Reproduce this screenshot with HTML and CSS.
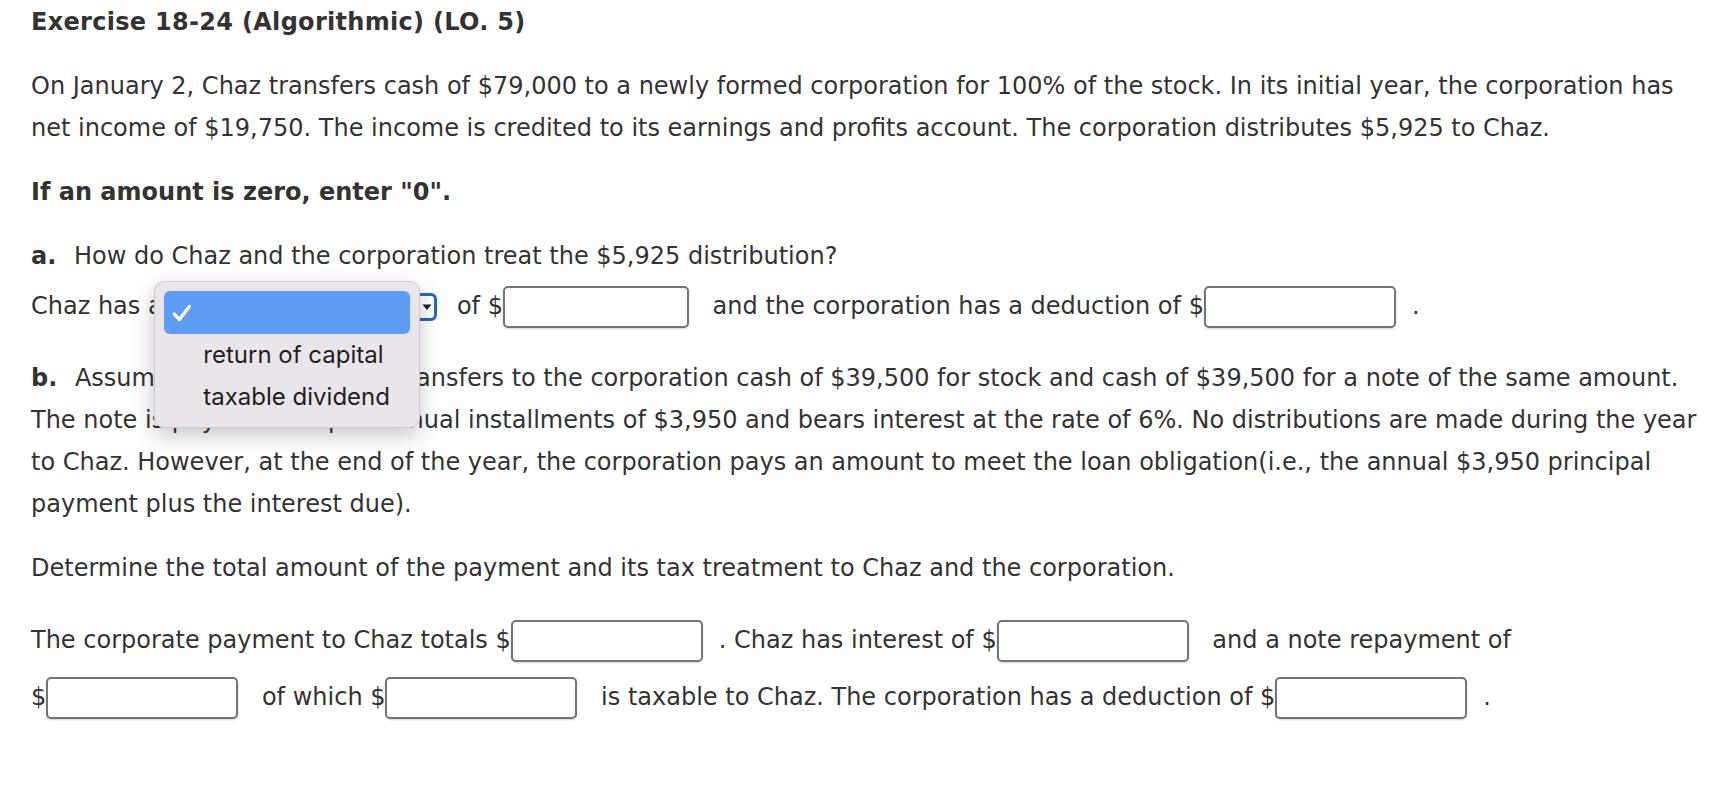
FILE: index.html
```html
<!DOCTYPE html>
<html lang="en">
<head>
<meta charset="utf-8">
<title>Exercise 18-24</title>
<link rel="stylesheet" href="styles.css">
</head>
<body>
<div class="page">
  <h1 class="title">Exercise 18-24 (Algorithmic) (LO. 5)</h1>
  <p class="para">On January 2, Chaz transfers cash of $79,000 to a newly formed corporation for 100% of the stock. In its initial year, the corporation has net income of $19,750. The income is credited to its earnings and profits account. The corporation distributes $5,925 to Chaz.</p>
  <p class="para strong">If an amount is zero, enter "0".</p>
  <p class="para"><b class="label">a.</b> How do Chaz and the corporation treat the $5,925 distribution?</p>
  <div class="row row-a">Chaz has a <span class="select-wrap"><span class="select"><svg class="arrow" viewBox="0 0 12 12" width="12" height="12"><path d="M1.5 3.5h9l-4.5 5.5z" fill="#222"/></svg></span><span class="popup"><span class="opt opt-sel"><svg class="check" viewBox="0 0 20 20" width="22" height="22"><path d="M3 10.8l4.6 5.2 9-12" fill="none" stroke="#fff" stroke-width="3" stroke-linecap="round" stroke-linejoin="round"/></svg></span><span class="opt">return of capital</span><span class="opt">taxable dividend</span></span></span> of $<input class="field field-short" type="text"> and the corporation has a deduction of $<input class="field" type="text">.</div>
  <p class="para para-b"><b class="label">b.</b> Assume instead that Chaz transfers to the corporation cash of $39,500 for stock and cash of $39,500 for a note of the same amount. The note is payable in equal annual installments of $3,950 and bears interest at the rate of 6%. No distributions are made during the year to Chaz. However, at the end of the year, the corporation pays an amount to meet the loan obligation(i.e., the annual $3,950 principal payment plus the interest due).</p>
  <p class="para">Determine the total amount of the payment and its tax treatment to Chaz and the corporation.</p>
  <div class="row row-b1">The corporate payment to Chaz totals $<input class="field" type="text">. Chaz has interest of $<input class="field" type="text"> and a note repayment of</div>
  <div class="row row-b2">$<input class="field" type="text"> of which $<input class="field" type="text"> is taxable to Chaz. The corporation has a deduction of $<input class="field" type="text">.</div>
</div>
</body>
</html>
```

FILE: styles.css
```css
html, body {
  margin: 0;
  padding: 0;
  background: #ffffff;
}

.page {
  padding: 1px 12px 40px 31px;
  font-family: "DejaVu Sans", Verdana, sans-serif;
  font-size: 24px;
  color: #333333;
}

.title {
  margin: 0;
  font-size: 24px;
  font-weight: bold;
  line-height: 42px;
  letter-spacing: 0.3px;
}

.para {
  margin: 22px 0 0 0;
  line-height: 42px;
}

.strong {
  font-weight: bold;
}

.label {
  margin-right: 10px;
}

.row {
  line-height: 42px;
  white-space: nowrap;
}

.row-a {
  margin-top: 8px;
}

.para-b {
  margin-top: 29px;
}

.row-b1 {
  margin-top: 30px;
}

.row-b2 {
  margin-top: 14px;
}

.field {
  display: inline-block;
  vertical-align: middle;
  box-sizing: border-box;
  width: 192px;
  height: 42px;
  margin: 0 16px 0 0;
  padding: 0 6px;
  border: 2px solid #747474;
  border-radius: 5px;
  background: #ffffff;
  box-shadow: 0 1px 2px rgba(0, 0, 0, 0.18);
  font: inherit;
}

.field-short {
  width: 186px;
}

.select-wrap {
  position: relative;
  display: inline-block;
  vertical-align: middle;
  width: 267px;
  height: 28px;
  margin-right: 12px;
}

.select {
  display: flex;
  align-items: center;
  justify-content: flex-end;
  box-sizing: border-box;
  width: 100%;
  height: 100%;
  padding-right: 1px;
  border: 3px solid #2a63c9;
  border-radius: 6px;
  background: #ffffff;
}

.arrow {
  display: block;
}

.popup {
  position: absolute;
  top: -12px;
  right: 17px;
  box-sizing: border-box;
  width: 266px;
  height: 147px;
  padding: 9px 9px 0 9px;
  display: flex;
  flex-direction: column;
  background: #e9e5ea;
  border: 1px solid #cdc9cd;
  border-radius: 10px;
  box-shadow: 0 8px 22px rgba(0, 0, 0, 0.22);
  font-family: Inter, "Noto Sans", sans-serif;
  font-size: 24px;
  color: #1f1f1f;
  line-height: 42px;
}

.opt {
  display: block;
  height: 42px;
  padding-left: 39px;
  white-space: nowrap;
}

.opt-sel {
  display: flex;
  align-items: center;
  height: 43px;
  padding-left: 7px;
  background: #5e9cf5;
  border-radius: 6px;
}

.check {
  display: block;
}
```
